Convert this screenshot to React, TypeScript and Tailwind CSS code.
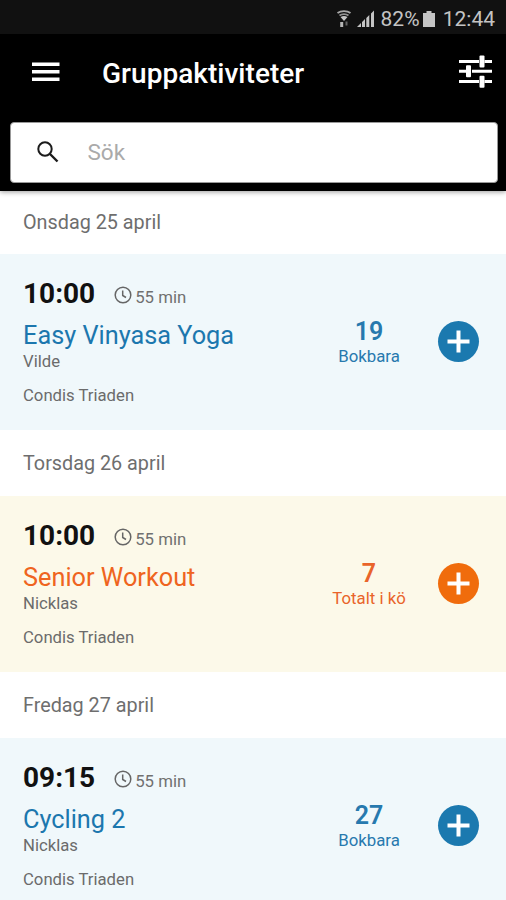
import { clsx } from "clsx";

type Activity = {
  day: string;
  time: string;
  duration: string;
  name: string;
  instructor: string;
  location: string;
  count: number;
  status: "bookable" | "queue";
};

const activities: Activity[] = [
  {
    day: "Onsdag 25 april",
    time: "10:00",
    duration: "55 min",
    name: "Easy Vinyasa Yoga",
    instructor: "Vilde",
    location: "Condis Triaden",
    count: 19,
    status: "bookable",
  },
  {
    day: "Torsdag 26 april",
    time: "10:00",
    duration: "55 min",
    name: "Senior Workout",
    instructor: "Nicklas",
    location: "Condis Triaden",
    count: 7,
    status: "queue",
  },
  {
    day: "Fredag 27 april",
    time: "09:15",
    duration: "55 min",
    name: "Cycling 2",
    instructor: "Nicklas",
    location: "Condis Triaden",
    count: 27,
    status: "bookable",
  },
];

function StatusBar() {
  return (
    <div className="flex h-[34px] items-center justify-end bg-[#111111] pt-1 pr-[11px] text-[#c4c4c4]">
      <svg width="16" height="18" viewBox="0 0 16 18" className="mr-[5px]" fill="none">
        <path d="M1.5 3C5 .5 11 .5 14.500 3" stroke="#a8a8a8" strokeWidth="1.8" />
        <path d="M3.500 5.500C6 3.600 10 3.600 12.500 5.500" stroke="#929292" strokeWidth="1.800" />
        <path d="M4.500 7C7 5.500 9 5.500 11.500 7L8 11Z" fill="#c4c4c4" />
        <path d="M4.200 12h3v5h-3z" fill="#b5b5b5" />
        <path d="M9.500 11.500h2v4h-2z" fill="#646464" />
      </svg>
      <svg width="18" height="18" viewBox="0 0 18 18" className="mr-[5px]" fill="currentColor">
        <path d="M0 17l4-4v4zM5 12l3-3v8H5zM9.300 8l3-3v12h-3zM14 3.500L17 .5V17h-3z" />
      </svg>
      <span className="text-[21px] leading-6 tracking-[0.1px]">82%</span>
      <svg width="12" height="18" viewBox="0 0 12 18" className="mr-2 ml-[3px]" fill="currentColor">
        <path d="M3.500 1h5v2H12v14H0V3h3.500z" />
      </svg>
      <span className="text-[21px] leading-6">12:44</span>
    </div>
  );
}

function Header() {
  return (
    <header className="relative h-[191px] bg-black shadow-[0_1px_5px_rgba(0,0,0,0.4)]">
      <StatusBar />
      <div className="flex h-[88px] items-center pr-[14px] pb-[10px] pl-8">
        <button type="button" aria-label="Meny" className="-mt-[2px] w-7">
          <svg width="28" height="20" viewBox="0 0 28 20" fill="white">
            <path d="M0 0.500h27.500v3.500H0zM0 8h27.500v3.500H0zM0 15.500h27.500v3.500H0z" />
          </svg>
        </button>
        <h1 className="mt-[2px] ml-[42px] flex-1 text-[28px] leading-8 font-medium tracking-[0.03px] text-white">
          Gruppaktiviteter
        </h1>
        <button type="button" aria-label="Filter" className="-mt-1">
          <svg width="33" height="33" viewBox="0 0 33 33" fill="white">
            <path d="M0 5h20v3H0zM25.500 5H33v3h-7.500zM0 14.700h7v3H0zM13 14.700H33v3H13zM0 25h20v3H0zM25.500 25H33v3h-7.500z" />
            <rect x="20.500" y="0.500" width="5" height="12" rx="1" />
            <rect x="7" y="10.200" width="5" height="12" rx="1" />
            <rect x="20.500" y="20.800" width="5" height="12" rx="1" />
          </svg>
        </button>
      </div>
      <label className="mr-[8.5px] ml-[9.5px] flex h-[61px] items-center rounded-[4px] border border-[#999999] bg-white pb-[2px] pl-[26px]">
        <svg width="22" height="22" viewBox="0 0 22 22" fill="none" stroke="#1b1b1b">
          <circle cx="8" cy="8" r="6.700" strokeWidth="2" />
          <path d="M13 13l7.500 7.500" strokeWidth="2.400" />
        </svg>
        <input
          type="text"
          placeholder="Sök"
          className="ml-[29px] w-72 text-[22.5px] leading-7 outline-none placeholder:text-[#aaaaaa]"
        />
      </label>
    </header>
  );
}

function ActivityCard({ activity }: { activity: Activity }) {
  const isQueue = activity.status === "queue";

  return (
    <article
      className={clsx(
        "flex h-[176px] justify-between pr-[27px] pl-[23px]",
        isQueue ? "bg-[#fcf9e9]" : "bg-[#f0f8fb]",
      )}
    >
      <div className="pt-6">
        <div className="flex h-8 items-baseline">
          <span className="text-[28px] leading-8 font-bold text-[#111111]">
            {activity.time}
          </span>
          <svg
            width="18"
            height="18"
            viewBox="0 0 18 18"
            fill="none"
            stroke="#666666"
            strokeWidth="1.500"
            className="ml-[19px] translate-y-px"
          >
            <circle cx="9" cy="9" r="7.800" />
            <path d="M8.700 4.500v5l3.300 2" />
          </svg>
          <span className="ml-[3px] text-[16.8px] leading-5 text-[#707070]">
            {activity.duration}
          </span>
        </div>
        <h2
          className={clsx(
            "mt-[10px] text-[25.3px] leading-8",
            isQueue ? "text-[#ef6420]" : "text-[#1c77ae]",
          )}
        >
          {activity.name}
        </h2>
        <p className="text-[16.7px] leading-5 text-[#6b6b6b]">{activity.instructor}</p>
        <p className="mt-[14px] text-[16.7px] leading-5 text-[#6b6b6b]">{activity.location}</p>
      </div>

      <div className="flex pt-[62px]">
        <div
          className={clsx(
            "w-[90px] text-center",
            isQueue ? "text-[#e9642a]" : "text-[#2779ae]",
          )}
        >
          <div className="mt-px text-[25px] leading-[29px] font-semibold">{activity.count}</div>
          <div className="text-[16.8px] leading-5">
            {isQueue ? "Totalt i kö" : "Bokbara"}
          </div>
        </div>
        <button
          type="button"
          aria-label="Boka"
          className={clsx(
            "mt-[5px] ml-6 flex size-[41px] items-center justify-center rounded-full",
            isQueue ? "bg-[#f06c0c]" : "bg-[#1b79af]",
          )}
        >
          <svg width="23" height="23" viewBox="0 0 23 23" stroke="white" strokeWidth="4">
            <path d="M11.500 0.500v22M0.500 11.500h22" />
          </svg>
        </button>
      </div>
    </article>
  );
}

export default function App() {
  return (
    <div className="h-[900px] w-full overflow-hidden bg-white font-[Roboto,sans-serif]">
      <Header />
      <main>
        {activities.map((activity, index) => (
          <section key={activity.day}>
            <div
              className={clsx(
                "flex items-center pl-[23px] text-[19.8px] leading-6 text-[#6e6e6e]",
                index === 0 ? "h-[63px]" : "h-[66px] pt-px",
              )}
            >
              {activity.day}
            </div>
            <ActivityCard activity={activity} />
          </section>
        ))}
      </main>
    </div>
  );
}
